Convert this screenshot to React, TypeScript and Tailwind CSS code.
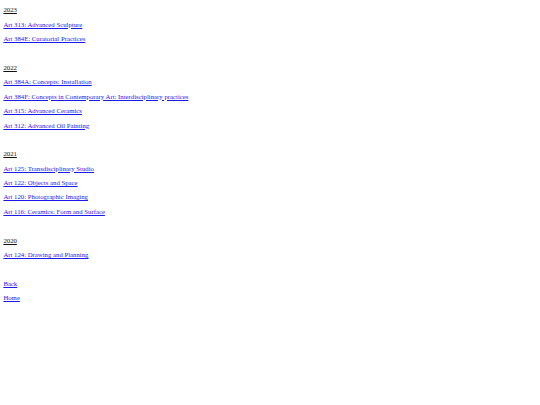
const groups: { year: string; courses: string[] }[] = [
  { year: "2023", courses: ["Art 313: Advanced Sculpture", "Art 384E: Curatorial Practices"] },
  {
    year: "2022",
    courses: [
      "Art 384A: Concepts: Installation",
      "Art 384F: Concepts in Contemporary Art: Interdisciplinary practices",
      "Art 315: Advanced Ceramics",
      "Art 312: Advanced Oil Painting",
    ],
  },
  {
    year: "2021",
    courses: [
      "Art 125: Transdisciplinary Studio",
      "Art 122: Objects and Space",
      "Art 120: Photographic Imaging",
      "Art 116: Ceramics: Form and Surface",
    ],
  },
  { year: "2020", courses: ["Art 124: Drawing and Planning"] },
];

function Row({ children }: { children?: React.ReactNode }) {
  return <div className="h-[7.75px] leading-[7.75px] whitespace-nowrap">{children}</div>;
}

export default function App() {
  return (
    <div
      className="min-h-[405px] bg-white pl-[3.375px] pt-[6.4px] text-[6.75px]"
      style={{ fontFamily: '"Liberation Serif", "Times New Roman", serif' }}
    >
      <div className="flex flex-col gap-[6.65px]">
        {groups.map((g) => (
          <div key={g.year} className="flex flex-col gap-[6.65px]">
            <Row>
              <a href="#" className="text-[#111] underline">{g.year}</a>
            </Row>
            {g.courses.map((c) => (
              <Row key={c}>
                <a href="#" className="text-[#1a1ae6] underline">{c}</a>
              </Row>
            ))}
            <Row />
          </div>
        ))}
        <Row>
          <a href="#" className="text-[#1a1ae6] underline">Back</a>
        </Row>
        <Row>
          <a href="#" className="text-[#1a1ae6] underline">Home</a>
        </Row>
      </div>
    </div>
  );
}
